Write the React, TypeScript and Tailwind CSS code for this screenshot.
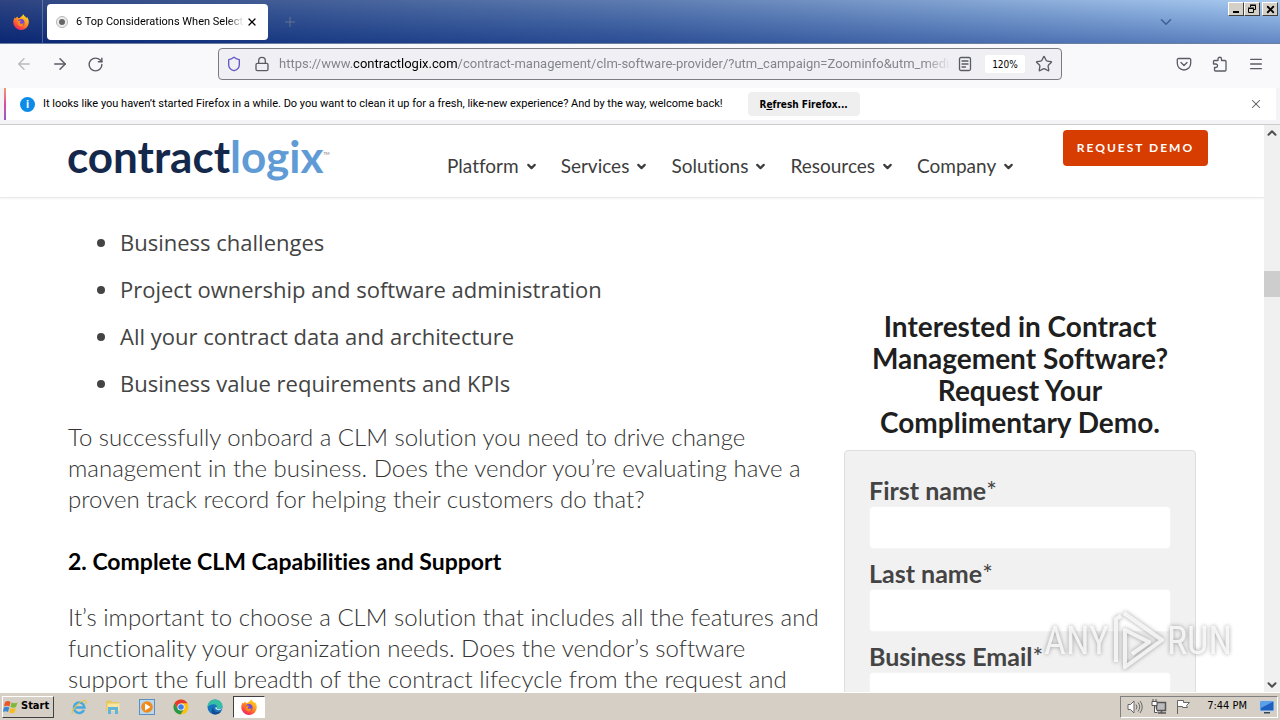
import React from 'react';
import {
  ArrowLeft,
  ArrowRight,
  ChevronDown,
  ChevronUp,
  Lock,
  Menu,
  Plus,
  RotateCw,
  Shield,
  Star,
  X,
} from 'lucide-react';

const navItems = ['Platform', 'Services', 'Solutions', 'Resources', 'Company'];

const bullets = [
  'Business challenges',
  'Project ownership and software administration',
  'All your contract data and architecture',
  'Business value requirements and KPIs',
];

const fields = [
  { id: 'firstname', label: 'First name' },
  { id: 'lastname', label: 'Last name' },
  { id: 'email', label: 'Business Email' },
];

function FirefoxIcon() {
  return (
    <svg viewBox="0 0 16 16" className="h-4 w-4">
      <defs>
        <linearGradient id="ffBody" x1="0.8" y1="0" x2="0.2" y2="1">
          <stop offset="0" stopColor="#ffe226" />
          <stop offset="0.4" stopColor="#ff9a1f" />
          <stop offset="0.75" stopColor="#ff4a3d" />
          <stop offset="1" stopColor="#e31587" />
        </linearGradient>
      </defs>
      <path
        d="M10.6.2c.3 1.400 1.200 2 2.200 2.900.3.3.5.700.6 1 .5-.2.700-.6.700-1 1.100 1.600 1.700 3.300 1.700 5.100a7.700 7.700 0 0 1-15.500.2c0-2 .6-3.800 1.700-5.200l.2 1.300C3 3.600 3.600 3 4.400 2.400c.1.800.5 1.400 1 1.800C7.500 3.800 8.800 2 10.600.2z"
        fill="url(#ffBody)"
      />
      <circle cx="8" cy="8.600" r="3.500" fill="#7048d8" />
      <path d="M4.300 7.500c1-1.500 3-1.300 4.400-.3-1.900.2-2.200 1.200-1.600 2.100.7 1 2.600.6 3.600-.6-.1 2.500-1.600 3.800-3.400 3.600-2-.2-3.300-2.300-3-4.800z" fill="#ff8a16" />
    </svg>
  );
}

function PocketIcon() {
  return (
    <svg viewBox="0 0 16 16" className="h-4 w-4" fill="none" stroke="#5b5b66" strokeWidth="1.300" strokeLinecap="round" strokeLinejoin="round">
      <path d="M2.500 2.500h11a1.200 1.200 0 0 1 1.200 1.200v3.600a6.700 6.700 0 0 1-13.400 0V3.700a1.200 1.200 0 0 1 1.200-1.200z" />
      <path d="M5 6.500l3 3 3-3" />
    </svg>
  );
}

function ExtensionsIcon() {
  return (
    <svg viewBox="0 0 16 16" className="h-4 w-4" fill="none" stroke="#5b5b66" strokeWidth="1.300" strokeLinejoin="round">
      <path d="M2.500 4.500H6V3a1.700 1.700 0 0 1 3.500 0v1.500H13a1 1 0 0 1 1 1V14a1 1 0 0 1-1 1H3.500a1 1 0 0 1-1-1v-2.500h1.300a1.700 1.700 0 0 0 0-3.500H1.500V5.500a1 1 0 0 1 1-1z" />
    </svg>
  );
}

function TitleBar() {
  return (
    <header className="flex h-11 shrink-0 bg-linear-to-r from-[#0b246b] via-[#4366a3] to-[#9cc4f0]">
      <div className="flex w-full border-b border-[#6b7fa0] bg-linear-to-b from-white/15 to-[#0a2a80]/40">
        <div className="flex w-[43px] shrink-0 items-center justify-center border-r border-white/25">
          <FirefoxIcon />
        </div>
        <div className="mt-1 ml-1 flex h-9 w-[221px] items-center rounded bg-white pl-2">
          <svg viewBox="0 0 14 14" className="h-3.5 w-3.5 shrink-0">
            <circle cx="7" cy="7" r="5.500" fill="#eee" stroke="#b5b5b5" />
            <circle cx="7" cy="7" r="3" fill="#666" />
          </svg>
          <span className="ml-[7px] w-[168px] mask-r-from-90% font-[Roboto] text-[11px] whitespace-nowrap text-black">
            6 Top Considerations When Selecti
          </span>
          <button aria-label="Close tab" className="ml-0.5 text-black">
            <X size={12} strokeWidth={2.5} />
          </button>
        </div>
        <button aria-label="New tab" className="ml-3.5 text-[#63738f]">
          <Plus size={16} strokeWidth={1.5} />
        </button>
        <button aria-label="List all tabs" className="mr-[53px] ml-auto text-[#3f5f96]">
          <ChevronDown size={18} />
        </button>
        <div className="mt-0.5 mr-0.5 flex h-3.5">
          <button aria-label="Minimize" className="flex w-4 items-end justify-center border border-t-white border-r-[#404040] border-b-[#404040] border-l-white bg-[#d4d0c8] pb-0.5">
            <span className="h-0.5 w-1.5 bg-black" />
          </button>
          <button aria-label="Restore" className="flex w-4 items-center justify-center border border-t-white border-r-[#404040] border-b-[#404040] border-l-white bg-[#d4d0c8]">
            <svg viewBox="0 0 10 10" className="h-2.5 w-2.5" fill="none" stroke="#000">
              <path d="M3.500 3V1.500h5v4H7M3 1h6" />
              <path d="M1.500 4.500h5v4h-5zM1 4h6" />
            </svg>
          </button>
          <button aria-label="Close" className="ml-0.5 flex w-4 items-center justify-center border border-t-white border-r-[#404040] border-b-[#404040] border-l-white bg-[#d4d0c8] text-black">
            <X size={11} strokeWidth={4} />
          </button>
        </div>
      </div>
    </header>
  );
}

function AddressBar() {
  return (
    <div className="flex h-11 shrink-0 items-center bg-[#f9f9fb] pb-1 text-[#5b5b66]">
      <div className="flex w-[218px] shrink-0 items-center gap-[18px] pl-[15px]">
        <button aria-label="Back" className="text-[#b9b9bf]">
          <ArrowLeft size={18} strokeWidth={1.8} />
        </button>
        <button aria-label="Forward">
          <ArrowRight size={18} strokeWidth={2} />
        </button>
        <button aria-label="Reload">
          <RotateCw size={17} strokeWidth={2} />
        </button>
      </div>
      <div className="flex h-8 w-[844px] items-center rounded border border-[#7b7b83] bg-[#f0f0f4] pr-2 pl-[7px]">
        <Shield size={16} strokeWidth={2} className="shrink-0 text-[#6257c5]" />
        <Lock size={16} strokeWidth={2} className="ml-3 shrink-0" />
        <p className="ml-[9px] w-[672px] mask-r-from-96% font-[Roboto] text-[13px] whitespace-nowrap text-[#84848c]">
          https://www.<span className="text-black">contractlogix.com</span>
          /contract-management/clm-software-provider/?utm_campaign=Zoominfo&amp;utm_mediu
        </p>
        <button aria-label="Reader view" className="ml-auto">
          <svg viewBox="0 0 16 16" className="h-4 w-4" fill="none" stroke="#5b5b66" strokeWidth="1.300" strokeLinecap="round">
            <rect x="2.500" y="1.500" width="11" height="13" rx="1.500" />
            <path d="M5 5h6M5 8h6M5 11h3.500" />
          </svg>
        </button>
        <button className="mr-2.5 ml-3 h-[18px] w-10 rounded-xs bg-white text-[10px] text-black">120%</button>
        <button aria-label="Bookmark">
          <Star size={18} strokeWidth={1.8} />
        </button>
      </div>
      <div className="ml-auto flex items-center gap-5 pr-4">
        <button aria-label="Pocket">
          <PocketIcon />
        </button>
        <button aria-label="Extensions">
          <ExtensionsIcon />
        </button>
        <button aria-label="Menu">
          <Menu size={16} strokeWidth={2} />
        </button>
      </div>
    </div>
  );
}

function NotificationBar() {
  return (
    <div className="h-[37px] shrink-0 border-b border-[#ccc] bg-[#f4f4f6] pr-1 pl-1">
      <div className="flex h-8 items-center bg-white text-[11px] text-black">
        <span className="h-full w-0.5 bg-linear-to-b from-[#f09a6a] via-[#e04aa0] to-[#9059c8]" />
        <span className="ml-3.5 flex h-[15px] w-[15px] items-center justify-center rounded-full bg-[#0c8ce9] text-[10px] font-bold text-white">
          i
        </span>
        <p className="ml-2 font-[Roboto] whitespace-nowrap">
          It looks like you haven’t started Firefox in a while. Do you want to clean it up for a fresh, like-new experience? And by the way, welcome back!
        </p>
        <button className="ml-[25px] h-6 w-28 rounded bg-[#efeff0] text-[10px] font-bold whitespace-nowrap">
          R<span className="underline">e</span>fresh Firefox...
        </button>
        <button aria-label="Dismiss" className="mr-[13px] ml-auto text-[#55555d]">
          <X size={14} strokeWidth={1.8} />
        </button>
      </div>
    </div>
  );
}

function SiteHeader() {
  return (
    <div className="flex h-[73px] shrink-0 border-b border-[#e9e9e9] pl-[67px] shadow-xs">
      <a href="#home" aria-label="contractlogix" className="w-[380px] shrink-0 pt-1 font-[Lato] text-[44px] leading-[54px] font-bold whitespace-nowrap text-[#14284b]">
        contract<span className="text-[#609bd5]">logix</span>
        <sup className="align-super text-[4px] text-[#999]">TM</sup>
      </a>
      <nav className="flex items-center gap-[23px] pt-2.5">
        {navItems.map((item) => (
          <a key={item} href="#nav" className="flex items-center gap-1.5 font-[Lato] text-[19px] leading-6 text-[#3d3d3d]">
            {item}
            <ChevronDown size={13} strokeWidth={4} />
          </a>
        ))}
      </nav>
      <a href="#demo" className="mt-[5px] mr-14 ml-auto flex h-9 w-[145px] items-center justify-center rounded bg-[#d73c00] font-[Lato] text-[12px] font-bold tracking-[2px] whitespace-nowrap text-white">
        REQUEST DEMO
      </a>
    </div>
  );
}

function Article() {
  return (
    <article className="w-[740px] shrink-0 whitespace-nowrap font-[Lato] text-[24px] leading-[31px] text-[#333]">
      <ul className="list-disc pt-7 pl-[52px] font-['Open_Sans'] text-[22px] leading-8 text-[#444]">
        {bullets.map((text) => (
          <li key={text} className="mb-[15px]">
            {text}
          </li>
        ))}
      </ul>
      <p className="mt-[22px] font-light">
        To successfully onboard a CLM solution you need to drive change
        <br />
        management in the business. Does the vendor you’re evaluating have a
        <br />
        proven track record for helping their customers do that?
      </p>
      <h3 className="mt-8 text-[23px] font-bold text-black">2. Complete CLM Capabilities and Support</h3>
      <p className="mt-6 font-light">
        It’s important to choose a CLM solution that includes all the features and
        <br />
        functionality your organization needs. Does the vendor’s software
        <br />
        support the full breadth of the contract lifecycle from the request and
      </p>
    </article>
  );
}

function DemoForm() {
  return (
    <aside className="mt-28 ml-9 w-[352px] shrink-0 font-[Lato]">
      <h2 className="text-center text-[28px] leading-8 font-bold whitespace-nowrap text-[#1f1f1f]">
        Interested in Contract
        <br />
        Management Software?
        <br />
        Request Your
        <br />
        Complimentary Demo.
      </h2>
      <form className="mt-3 rounded border border-[#dedede] bg-[#f1f1f1] px-6 pt-[23px]">
        {fields.map((field) => (
          <div key={field.id} className="mb-2">
            <label htmlFor={field.id} className="block text-[25px] leading-8 font-bold text-[#444]">
              {field.label}
              <span className="font-normal">*</span>
            </label>
            <input id={field.id} type="text" className="block h-[43px] w-full rounded border border-[#f4f4f4] bg-white px-3" />
          </div>
        ))}
      </form>
    </aside>
  );
}

function Scrollbar() {
  return (
    <div className="flex w-4 shrink-0 flex-col items-center bg-[#f0f0f0] text-[#505050]">
      <ChevronUp size={14} strokeWidth={3.5} className="mt-px" />
      <span className="mt-[131px] h-[26px] w-full bg-[#cdcdcd]" />
      <ChevronDown size={14} strokeWidth={3.5} className="mt-auto" />
    </div>
  );
}

function Watermark() {
  return (
    <div className="pointer-events-none absolute right-12 bottom-[18px] flex items-center font-['Liberation_Sans_Narrow','Roboto_Condensed',Roboto] text-[38px] leading-none text-white/80 drop-shadow-[0_0_2px_rgba(0,0,0,0.45)]">
      <span>ANY</span>
      <svg viewBox="0 0 58 66" className="h-[66px] w-[58px]" fill="none" stroke="currentColor" strokeWidth="4" strokeLinejoin="round">
        <path d="M15 5L53 32L16 59V22L40 34L23 46" />
        <path d="M7 54V11L12 8" />
      </svg>
      <span>RUN</span>
    </div>
  );
}

function Taskbar() {
  return (
    <footer className="flex h-7 shrink-0 items-center border-t border-white bg-[#d6cfc6] text-[11px] text-black">
      <button className="ml-0.5 flex h-[22px] w-[52px] items-center gap-0.5 border border-t-white border-r-[#404040] border-b-[#404040] border-l-white font-bold">
        <svg viewBox="0 0 16 16" className="h-4 w-4 shrink-0">
          <path d="M2 3q3-2 5.500 0L6.500 7.500Q4 6 1 7.500z" fill="#e8582a" />
          <path d="M8.500 3.500q3 1.500 6 0L13 8q-3 1.500-5.500 0z" fill="#7fb93a" />
          <path d="M.8 8.500q3-1.500 5.500 0L5 13q-2.500-1.500-5 0z" fill="#3b87d0" />
          <path d="M7.300 9q3 1.500 5.500 0l-1.200 4.500q-3 1.500-5.500 0z" fill="#f6bd22" />
        </svg>
        Start
      </button>
      <div className="ml-[17px] flex items-center gap-[18px]">
        <button aria-label="Internet Explorer">
          <svg viewBox="0 0 16 16" className="h-4 w-4" fill="none">
            <path d="M13 11a5.300 5.300 0 1 1 .5-2.500H4" stroke="#45a9e0" strokeWidth="2.500" />
            <path d="M1.500 15C-.5 12 9 1 14.500 1.500c1 .3.800 2 0 3.300" stroke="#e8c445" strokeWidth="1.200" />
          </svg>
        </button>
        <button aria-label="Explorer">
          <svg viewBox="0 0 16 16" className="h-4 w-4">
            <path d="M1 3l1-1.500h4L7 3h7v9H1z" fill="#e6c763" />
            <path d="M2.500 4.500h12V12h-12z" fill="#f7e6a1" />
            <path d="M3 8h10v7h-3v-4H6v4H3z" fill="#63b4dc" />
          </svg>
        </button>
        <button aria-label="Media Player">
          <svg viewBox="0 0 16 16" className="h-4 w-4">
            <rect x=".5" y=".5" width="15" height="15" fill="#b9d7ef" stroke="#5a90c0" />
            <circle cx="8" cy="8" r="5.800" fill="#f08a1c" />
            <path d="M6 4.500l5.500 3.500L6 11.500z" fill="#fff" />
          </svg>
        </button>
        <button aria-label="Chrome">
          <svg viewBox="0 0 16 16" className="h-4 w-4">
            <circle cx="8" cy="8" r="7.500" fill="#fbc116" />
            <path d="M1.500 4.200A7.500 7.500 0 0 1 14.500 4.300H8L4.800 9.800z" fill="#e33b2e" />
            <path d="M1.500 4.200A7.500 7.500 0 0 0 7.500 15.500l3.700-5.700L8 11.500 4.800 9.800z" fill="#279847" />
            <circle cx="8" cy="8" r="3.600" fill="#fff" />
            <circle cx="8" cy="8" r="2.800" fill="#3b7ded" />
          </svg>
        </button>
        <button aria-label="Edge">
          <svg viewBox="0 0 16 16" className="h-4 w-4">
            <circle cx="8" cy="8" r="7.500" fill="#1673bd" />
            <path d="M.5 8C.5 3.500 4 .5 8 .5s7.500 3 7.500 6c0 2.500-2 3.700-4 3.700-1.500 0-2-.7-1.600-1.400C10.500 7 9 5.300 6.500 5.300 4 5.300 1.500 6.500.5 8z" fill="#37bfa6" />
            <path d="M6.500 8c-1 4 3 6 7.500 4.500-1 2-3.500 3-6 3-3 0-5-3-1.500-7.500z" fill="#134d91" />
            <path d="M9.500 10.500c-2-1-1-2.500 0-2.500.5 1.500 0 2 2 2.300 1.500.2 3-.6 3.700-1.500-.5 2.200-3.500 3-5.700 1.700z" fill="#e6eef2" />
          </svg>
        </button>
      </div>
      <button aria-label="Firefox" className="ml-2.5 flex h-[22px] w-8 items-center justify-center border border-t-[#404040] border-r-white border-b-white border-l-[#404040] bg-white">
        <FirefoxIcon />
      </button>
      <div className="mr-0.5 ml-auto flex h-[22px] items-center gap-2 border border-t-[#808080] border-r-white border-b-white border-l-[#808080] pr-0.5 pl-1.5">
        <svg viewBox="0 0 16 16" className="h-4 w-4" fill="none" stroke="#666">
          <path d="M1 5.500h2.500L7 2v12l-3.500-3.500H1z" fill="#fff" />
          <path d="M9 5.500q2 2.500 0 5M11 3.500q3.500 4.500 0 9M13 2q4.500 6 0 12" />
        </svg>
        <svg viewBox="0 0 16 16" className="h-4 w-4" fill="none" stroke="#555">
          <path d="M5.500 3.500h9v8h-9z" fill="#bbb" strokeWidth="1.500" />
          <path d="M7 14h8M10.500 12v2" strokeWidth="1.500" />
          <path d="M1 2.500h5v4H1zM2 0v2M5 0v2M3.500 7v6.500h3" fill="#fff" />
        </svg>
        <svg viewBox="0 0 16 16" className="h-4 w-4" fill="#fff" stroke="#666">
          <path d="M2.500 15V1.500h6v2h6l-3 3 1 2h-5v-1h-5" />
        </svg>
        <span className="ml-2 whitespace-nowrap">7:44 PM</span>
        <svg viewBox="0 0 16 16" className="ml-1 h-4 w-4">
          <path d="M1 2h14v10H1z" fill="#1e60c0" stroke="#b7d3ec" />
          <path d="M1.500 2.500h13L2 9z" fill="#5aa0e8" />
          <path d="M5 13h6v1.500H5z" fill="#345" />
        </svg>
      </div>
    </footer>
  );
}

export default function App() {
  return (
    <div className="flex h-screen flex-col overflow-hidden bg-white font-['DejaVu_Sans_Condensed','DejaVu_Sans',sans-serif] [font-variant-ligatures:no-common-ligatures]">
      <TitleBar />
      <AddressBar />
      <NotificationBar />
      <div className="relative flex min-h-0 flex-1">
        <main className="flex min-w-0 flex-1 flex-col overflow-hidden">
          <SiteHeader />
          <div className="flex min-h-0 flex-1 overflow-hidden pl-[68px]">
            <Article />
            <DemoForm />
          </div>
        </main>
        <Scrollbar />
        <Watermark />
      </div>
      <Taskbar />
    </div>
  );
}
